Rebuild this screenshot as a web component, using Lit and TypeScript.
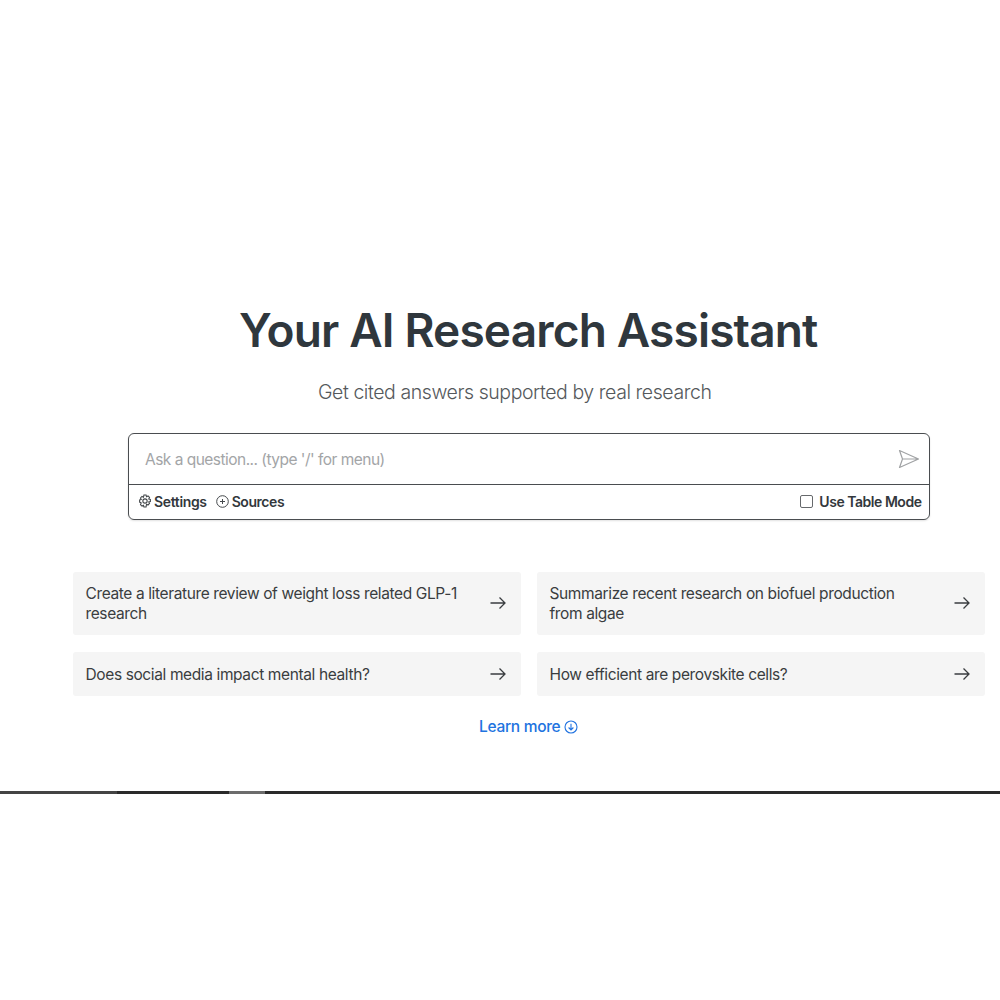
import { LitElement, html, css, svg } from "lit";
import { customElement } from "lit/decorators.js";

const arrow = svg`<path d="M1.5 9h14.5M10.5 3.5 16 9l-5.5 5.5" fill="none" stroke="#3a3d40" stroke-width="1.3"/>`;

@customElement("app-root")
export class AppRoot extends LitElement {
  static styles = css`
    :host { display: block; width: 1000px; height: 1000px; background: #fff; overflow: hidden; font-family: "Inter", "Liberation Sans", sans-serif; color: #33383c; }
    .page { display: flex; flex-direction: column; height: 1000px; padding-top: 302px; box-sizing: border-box; }
    h1 { margin: 0 0 0 239px; width: 580px; font-size: 46px; line-height: 56px; font-weight: 600; letter-spacing: -0.83px; color: #2f373d; white-space: nowrap; }
    .sub { margin: 21px 0 0 318px; font-size: 19.5px; line-height: 26px; font-weight: 300; letter-spacing: -0.43px; color: #55595c; white-space: nowrap; }
    .box { margin: 28px 0 0 128px; width: 802px; height: 87px; box-sizing: border-box; border: 1px solid #4a4d50; border-radius: 6px; display: flex; flex-direction: column; box-shadow: 0 1px 2px rgba(0,0,0,.12); }
    .input { height: 51px; flex: none; box-sizing: border-box; border-bottom: 1px solid #4a4d50; display: flex; align-items: center; justify-content: space-between; padding: 0 9px 0 16px; font-size: 15.5px; letter-spacing: -0.52px; color: #a3a5a7; }
    .tools { flex: 1; display: flex; align-items: center; padding: 0 7.5px 2px 8.5px; font-size: 14px; font-weight: 600; letter-spacing: -0.35px; color: #33383c; }
    .tool { display: flex; align-items: center; gap: 3px; margin-right: 9px; }
    .settings { gap: 2.5px; }
    .sources { letter-spacing: -0.45px; }
    .spacer { flex: 1; }
    .check { width: 11px; height: 11px; border: 1px solid #66696c; border-radius: 2px; margin-right: 6px; }
    .mode { letter-spacing: -0.47px; }
    .grid { margin: 51.5px 0 0 73px; width: 912px; display: grid; grid-template-columns: 448px 448px; column-gap: 16px; row-gap: 17px; }
    .card { background: #f5f5f5; border-radius: 3px; display: flex; align-items: center; justify-content: space-between; box-sizing: border-box; padding: 0 14px 0 12.5px; font-size: 15.5px; line-height: 20px; letter-spacing: -0.38px; color: #3a3d40; }
    .tall { height: 63.5px; }
    .short { height: 44px; }
    .card span { width: 375px; margin-top: 2px; }
    .more { margin: 21px 0 0 479px; display: flex; align-items: center; gap: 4px; font-size: 15.5px; line-height: 20px; font-weight: 500; letter-spacing: -0.3px; color: #2173e0; }
    .rule { margin-top: 54px; height: 3px; background: #2a2a2a; display: flex; }
    .rule i { display: block; }
    .r1 { width: 117px; background: #444; }
    .r2 { width: 112px; }
    .r3 { width: 36px; background: #6c6c6c; }
    svg { display: block; flex: none; }
  `;

  private card(text: string, cls: string) {
    return html`<div class="card ${cls}"><span>${text}</span><svg width="18" height="18" viewBox="0 0 18 18">${arrow}</svg></div>`;
  }

  render() {
    return html`<div class="page">
      <h1>Your AI Research Assistant</h1>
      <div class="sub">Get cited answers supported by real research</div>
      <div class="box">
        <div class="input">
          <span>Ask a question... (type '/' for menu)</span>
          <svg width="22" height="20" viewBox="0 0 22 20"><path d="M1.5 1.5 20.5 10 1.5 18.5 4.5 10ZM4.5 10H20.5" fill="none" stroke="#a0a2a4" stroke-width="1.2" stroke-linejoin="round"/></svg>
        </div>
        <div class="tools">
          <div class="tool settings">
            <svg width="14" height="14" viewBox="0 0 13 13" fill="none" stroke="#44484b" stroke-width="1"><circle cx="6.5" cy="6.5" r="2"/><path d="M5.5 1h2l.4 1.5 1.4-.7 1.4 1.4-.7 1.4 1.5.4v2l-1.5.4.7 1.4-1.4 1.4-1.4-.7L7.5 12h-2l-.4-1.5-1.4.7-1.4-1.4.7-1.4L1.5 7.5v-2l1.5-.4-.7-1.4 1.4-1.4 1.4.7Z"/></svg>
            Settings
          </div>
          <div class="tool sources">
            <svg width="13" height="13" viewBox="0 0 13 13" fill="none" stroke="#44484b" stroke-width="1"><circle cx="6.5" cy="6.5" r="5.8"/><path d="M6.5 4v5M4 6.5h5"/></svg>
            Sources
          </div>
          <div class="spacer"></div>
          <div class="check"></div>
          <span class="mode">Use Table Mode</span>
        </div>
      </div>
      <div class="grid">
        ${this.card("Create a literature review of weight loss related GLP-1 research", "tall")}
        ${this.card("Summarize recent research on biofuel production from algae", "tall")}
        ${this.card("Does social media impact mental health?", "short")}
        ${this.card("How efficient are perovskite cells?", "short")}
      </div>
      <div class="more">Learn more
        <svg width="14" height="14" viewBox="0 0 14 14" fill="none" stroke="#2173e0" stroke-width="1.1"><circle cx="7" cy="7" r="6"/><path d="M7 3.8v6M4.6 7.5 7 10l2.4-2.5"/></svg>
      </div>
      <div class="rule"><i class="r1"></i><i class="r2"></i><i class="r3"></i></div>
    </div>`;
  }
}
